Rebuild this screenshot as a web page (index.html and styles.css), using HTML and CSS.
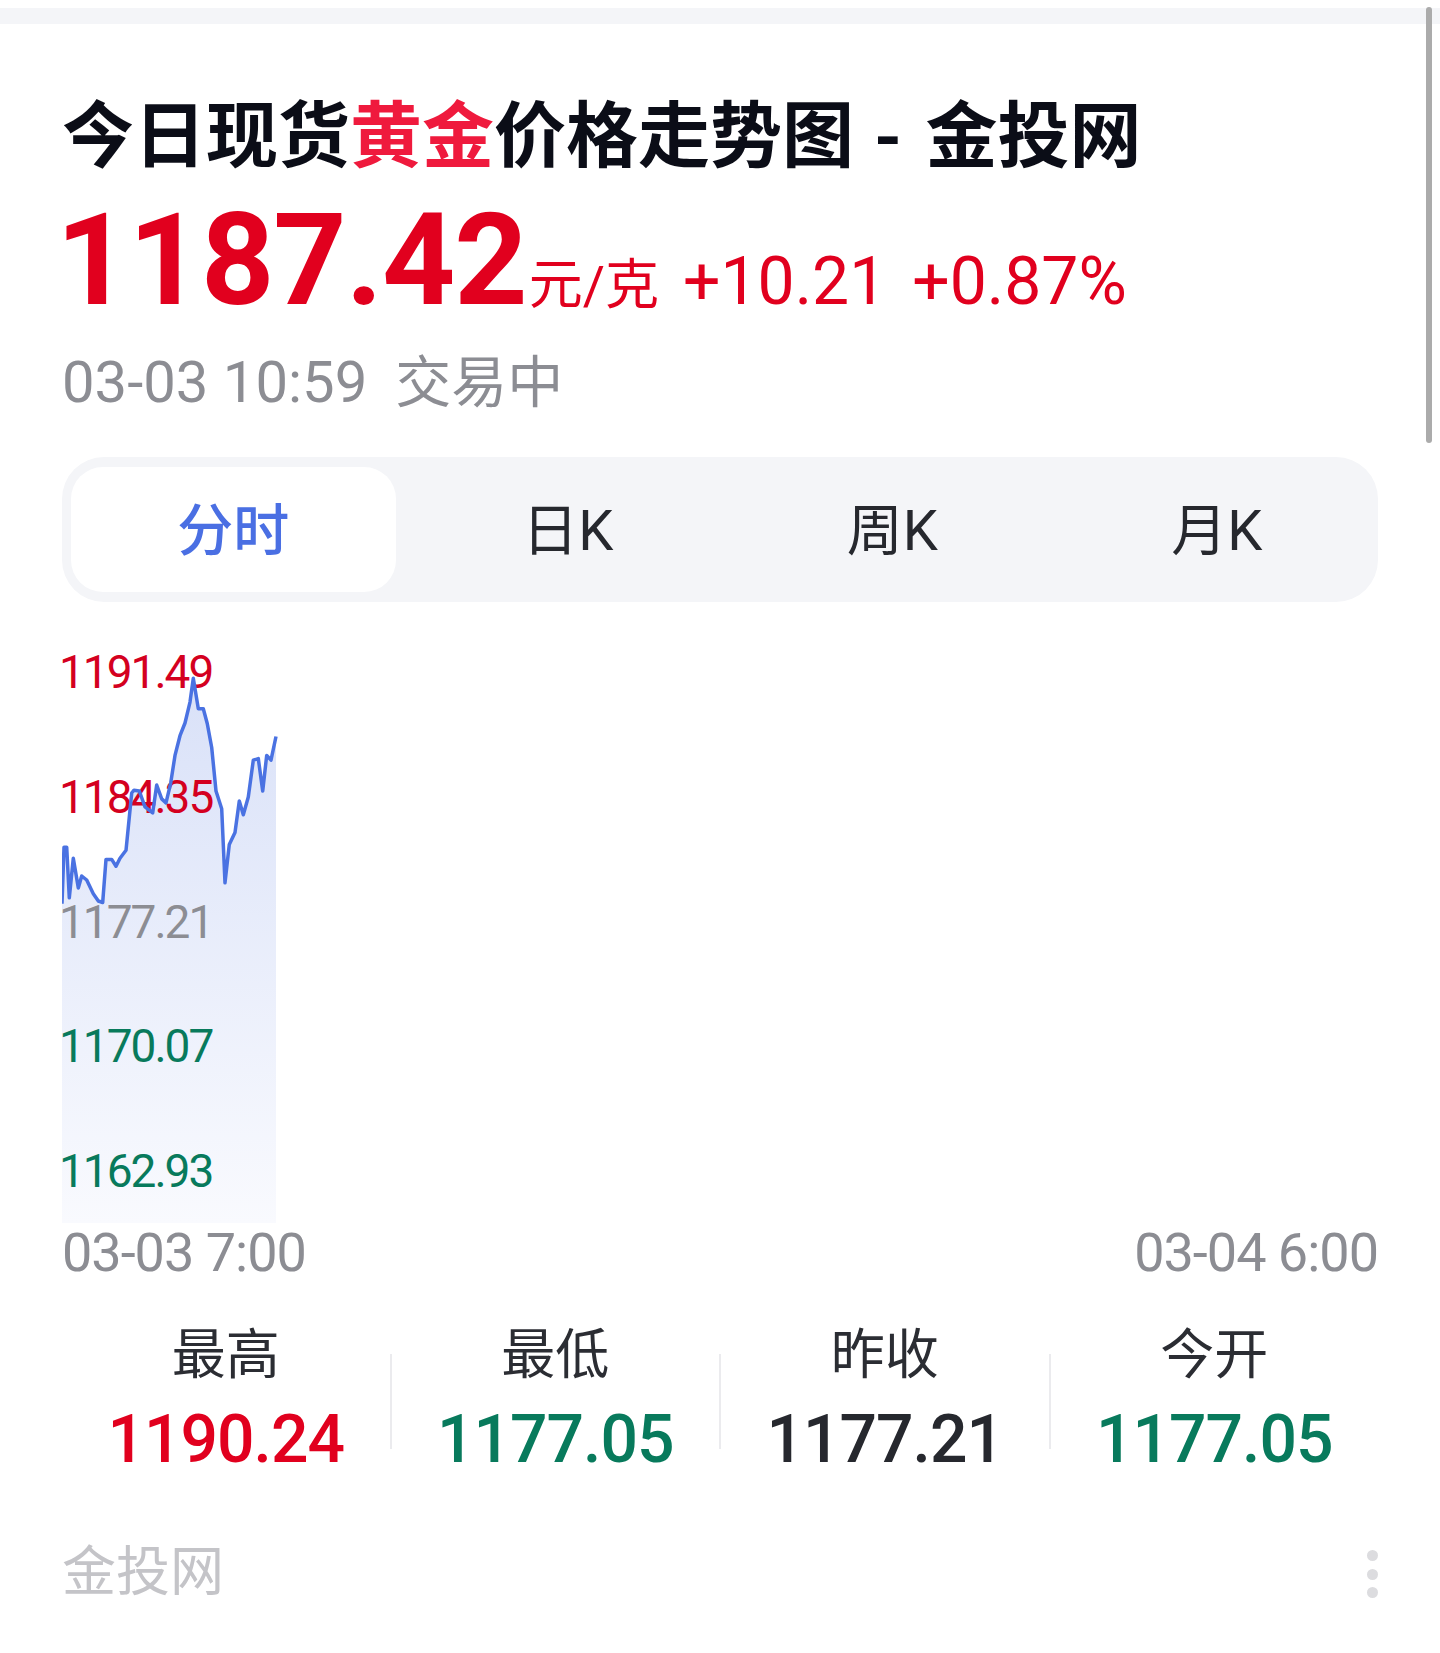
FILE: index.html
```html
<!DOCTYPE html>
<html lang="zh-CN">
<head>
    <meta charset="UTF-8">
    <meta name="viewport" content="width=device-width, initial-scale=1.0">
    <title>今日现货黄金价格走势图 - 金投网</title>
    <link rel="stylesheet" href="styles.css">
</head>
<body>
    <div class="scrollbar"></div>
    <div class="band"></div>

    <main class="page">
        <h1 class="title">今日现货<span class="gold">黄金</span>价格走势图 <span class="dash">-</span> 金投网</h1>

        <div class="quote">
            <span class="price">1187.42</span>
            <span class="unit">元/克</span>
            <span class="change">+10.21</span>
            <span class="change pct">+0.87%</span>
        </div>

        <div class="status">03-03 10:59<span class="state">交易中</span></div>

        <div class="tabs">
            <div class="tab active">分时</div>
            <div class="tab">日K</div>
            <div class="tab">周K</div>
            <div class="tab">月K</div>
        </div>

        <div class="chart">
            <svg class="plot" viewBox="62 640 1316 585" preserveAspectRatio="none">
                <defs>
                    <linearGradient id="area" x1="0" y1="677" x2="0" y2="1222" gradientUnits="userSpaceOnUse">
                        <stop offset="0" stop-color="#d9e1f8"/>
                        <stop offset="1" stop-color="#f9fafe"/>
                    </linearGradient>
                </defs>
                <polygon fill="url(#area)" points="62,902.7 64,846.2 66.7,846.2 69.3,896.8 73.3,857.2 78.3,886.9 81.7,875 86.7,879 93.3,892.8 98.3,900 102.7,901.5 106,858.4 111.7,858.4 116,865.2 120,857.2 126,849.3 131.7,792 134,789.2 139.3,790 145,805.8 152.7,811.8 156.7,784.1 161.7,797.9 166,801.9 170.7,782.1 175,754.4 180,734.7 185,722 190,701.1 193.3,677.3 198.3,707.8 203.3,707.8 207.3,722.8 211.7,746.5 216,790 221.7,807.8 225,881.8 229.3,843.4 235,831.5 239.3,799.9 243.3,813.8 248.3,796 253.3,759.2 258.3,757.6 262.7,790 266.7,754.4 271,759.2 276,735.5 276,1222 62,1222"/>
            </svg>
            <div class="ylabels">
                <span class="up">1191.49</span>
                <span class="up">1184.35</span>
                <span class="flat">1177.21</span>
                <span class="down">1170.07</span>
                <span class="down">1162.93</span>
            </div>
            <svg class="plot" viewBox="62 640 1316 585" preserveAspectRatio="none">
                <polyline fill="none" stroke="#4a72e2" stroke-width="3.5" stroke-linejoin="round" points="62,902.7 64,846.2 66.7,846.2 69.3,896.8 73.3,857.2 78.3,886.9 81.7,875 86.7,879 93.3,892.8 98.3,900 102.7,901.5 106,858.4 111.7,858.4 116,865.2 120,857.2 126,849.3 131.7,792 134,789.2 139.3,790 145,805.8 152.7,811.8 156.7,784.1 161.7,797.9 166,801.9 170.7,782.1 175,754.4 180,734.7 185,722 190,701.1 193.3,677.3 198.3,707.8 203.3,707.8 207.3,722.8 211.7,746.5 216,790 221.7,807.8 225,881.8 229.3,843.4 235,831.5 239.3,799.9 243.3,813.8 248.3,796 253.3,759.2 258.3,757.6 262.7,790 266.7,754.4 271,759.2 276,735.5"/>
            </svg>
        </div>

        <div class="xaxis">
            <span>03-03 7:00</span>
            <span>03-04 6:00</span>
        </div>

        <div class="stats">
            <div class="stat">
                <div class="stat-label">最高</div>
                <div class="stat-value up">1190.24</div>
            </div>
            <div class="divider"></div>
            <div class="stat">
                <div class="stat-label">最低</div>
                <div class="stat-value down">1177.05</div>
            </div>
            <div class="divider"></div>
            <div class="stat">
                <div class="stat-label">昨收</div>
                <div class="stat-value">1177.21</div>
            </div>
            <div class="divider"></div>
            <div class="stat">
                <div class="stat-label">今开</div>
                <div class="stat-value down">1177.05</div>
            </div>
        </div>

        <footer class="foot">
            <span class="brand">金投网</span>
            <span class="more"><i></i><i></i><i></i></span>
        </footer>
    </main>
</body>
</html>
```

FILE: styles.css
```css
body {
    margin: 0;
    padding: 0;
    background: #fff;
    font-family: Roboto, "Noto Sans CJK SC", sans-serif;
    color: #26282e;
}
.scrollbar {
    position: fixed;
    top: 7px;
    right: 8px;
    width: 6px;
    height: 436px;
    border-radius: 3px;
    background: #ababab;
}
.band {
    margin-top: 8px;
    height: 16px;
    background: #f4f5f8;
}
.page {
    padding: 0 62px;
}
.title {
    margin: 63px 0 0;
    font-size: 72px;
    line-height: 86px;
    font-weight: 700;
    font-family: "Noto Sans CJK SC", sans-serif;
    color: #0b0d17;
}
.gold {
    color: #ef1a3d;
}
.dash {
    margin: 0 8px 0 4px;
}
.quote {
    display: flex;
    align-items: baseline;
    margin-top: 23px;
    color: #e1001e;
}
.price {
    font-size: 128px;
    line-height: 128px;
    font-weight: 700;
    margin-left: -6px;
    letter-spacing: -1px;
}
.unit {
    font-size: 54px;
    line-height: 54px;
    margin-left: 2px;
}
.change {
    font-size: 66px;
    line-height: 66px;
    margin-left: 24px;
}
.change.pct {
    margin-left: 26px;
}
.status {
    margin-top: 23px;
    font-size: 58px;
    line-height: 70px;
    color: #8c8d93;
}
.state {
    margin-left: 28px;
    font-size: 56px;
}
.tabs {
    display: flex;
    margin-top: 39px;
    padding: 10px 9px;
    background: #f4f5f8;
    border-radius: 42px;
}
.tab {
    flex: 1;
    height: 125px;
    box-sizing: border-box;
    padding-bottom: 8px;
    display: flex;
    align-items: center;
    justify-content: center;
    font-size: 56px;
    color: #26282e;
    border-radius: 32px;
    text-indent: 20px;
}
.tab.active {
    background: #fff;
    color: #4a6fe3;
    font-weight: 500;
    text-indent: 0;
}
.chart {
    position: relative;
    margin-top: 39px;
    height: 585px;
}
.plot {
    position: absolute;
    top: 0;
    left: 0;
    width: 100%;
    height: 100%;
}
.ylabels {
    position: absolute;
    top: 8px;
    left: -3px;
    display: flex;
    flex-direction: column;
    gap: 78.8px;
    font-size: 46px;
    line-height: 46px;
    letter-spacing: -2px;
}
.up {
    color: #d4001f;
}
.flat {
    color: #8c8d93;
}
.down {
    color: #087a5c;
}
.xaxis {
    display: flex;
    justify-content: space-between;
    margin-top: 0;
    font-size: 54px;
    line-height: 54px;
    color: #8c8d93;
    letter-spacing: -1px;
}
.stats {
    display: flex;
    align-items: center;
    margin-top: 49px;
}
.stat {
    flex: 1;
    text-align: center;
}
.stat-label {
    font-size: 54px;
    line-height: 54px;
    color: #2b2d33;
}
.stat-value {
    margin-top: 24px;
    font-size: 66px;
    line-height: 66px;
    font-weight: 500;
    letter-spacing: -1px;
}
.stat-value.up {
    color: #e1001e;
}
.divider {
    width: 2px;
    height: 95px;
    background: #ebebee;
}
.foot {
    display: flex;
    justify-content: space-between;
    align-items: flex-start;
    margin-top: 73px;
    padding-bottom: 40px;
}
.brand {
    font-size: 54px;
    line-height: 54px;
    color: #c4c4c8;
}
.more {
    display: flex;
    flex-direction: column;
    gap: 7.5px;
    margin-top: 4px;
}
.more i {
    width: 11px;
    height: 11px;
    border-radius: 50%;
    background: #dcdcdf;
}
```
